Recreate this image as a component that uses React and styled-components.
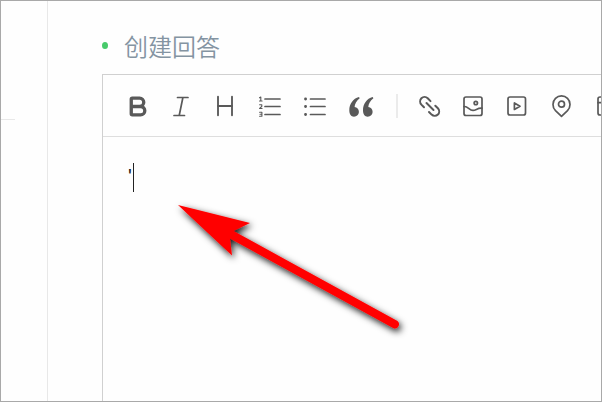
import React from "react";
import styled, { createGlobalStyle } from "styled-components";
import { Bold, Heading } from "lucide-react";

const GlobalStyle = createGlobalStyle`
  *, *::before, *::after { box-sizing: border-box; }
  body { margin: 0; background: #fefefe; font-family: "Noto Sans CJK SC", sans-serif; }
`;

const Page = styled.div`
  position: relative;
  display: flex;
  min-height: 100vh;
  overflow: hidden;
  border: 1px solid #a9a9a9;
`;

const Sidebar = styled.aside`
  flex: none;
  width: 47px;
  padding-top: 118px;
  border-right: 1px solid #e8e8e8;
`;

const SidebarRule = styled.hr`
  width: 14px;
  margin: 0;
  border: 0;
  border-top: 1px solid #e8e8e8;
`;

const Main = styled.main`
  flex: 1;
  min-width: 0;
  display: flex;
  flex-direction: column;
  padding-left: 54px;
`;

const Title = styled.h1`
  display: flex;
  align-items: center;
  gap: 16px;
  height: 73px;
  margin: 0;
  padding-top: 16px;
  color: #8494a2;
  font-size: 24px;
  font-weight: 350;
  line-height: 32px;
`;

const Dot = styled.span`
  width: 6px;
  height: 7px;
  border-radius: 50%;
  background: #47ca6b;
`;

const Editor = styled.section`
  flex: 1;
  display: flex;
  flex-direction: column;
  border: 1px solid #d0d0d0;
  border-width: 1px 0 0 1px;
`;

const Toolbar = styled.div`
  display: flex;
  overflow: hidden;
  padding: 19px 0 18px 12px;
  border-bottom: 1px solid #dedede;
`;

const ToolButton = styled.button`
  flex: none;
  display: flex;
  align-items: center;
  justify-content: center;
  width: ${(p) => (p.$wide ? 46 : 44)}px;
  height: 24px;
  padding: 0;
  border: 0;
  background: none;
  color: #595959;
  cursor: pointer;

  svg { flex: none; }
`;

const Divider = styled.span`
  flex: none;
  width: 2px;
  margin: 0 10px 0 11px;
  background: #ebebeb;
`;

const Writing = styled.div`
  position: relative;
  flex: 1;
  display: flex;
`;

const TextBox = styled.textarea`
  flex: 1;
  padding: 24px 25px;
  border: 0;
  outline: 0;
  resize: none;
  background: transparent;
  color: #1a1a1a;
  font: 20px/30px "Liberation Sans", sans-serif;
`;

const Caret = styled.span`
  position: absolute;
  left: 30px;
  top: 26px;
  width: 1px;
  height: 29px;
  background: #222;
`;

const Arrow = styled.svg`
  position: absolute;
  left: 163px;
  top: 191px;
  pointer-events: none;
`;

const Icon = ({ children }) => (
  <svg width="24" height="24" viewBox="0 0 24 24" fill="none" stroke="currentColor" strokeWidth="1.7" strokeLinecap="round" strokeLinejoin="round" aria-hidden="true">
    {children}
  </svg>
);

const ItalicIcon = () => (
  <Icon>
    <path d="M8.500 3.500h10.500M5 21.500h10.500M13.900 3.500 10.200 21.500" />
  </Icon>
);

const OrderedIcon = () => (
  <Icon>
    <path d="M7 5h15M7 12.5h15M7 20.5h15" />
    <g strokeWidth="1.1">
      <path d="M1.5 3.8 2.8 3v4M1.5 7h2.6" />
      <path d="M1.6 10.8h2.2v1.6L1.6 14.5h2.5" />
      <path d="M1.6 18.2h2.3v4H1.6M2 20.2h1.9" />
    </g>
  </Icon>
);

const BulletIcon = () => (
  <Icon>
    <path d="M6.5 5H21M6.5 12.5H21M6.5 20.5H21" />
    <path d="M1.500 5h.1M1.500 12.500h.1M1.500 20.500h.1" strokeWidth="2.8" />
  </Icon>
);

const QuoteIcon = () => (
  <svg width="26" height="24" viewBox="0 0 26 24" fill="currentColor" aria-hidden="true">
    <path d="M10 3C4 4.5.3 10 .3 16.5c0 3.7 1.8 6.2 4.7 6.2 2.8 0 4.9-2.1 4.9-4.9 0-2.7-1.8-4.8-4.3-4.9C5.8 9.8 7.4 6.8 10.7 4.2Z" />
    <path d="M23.7 3C17.7 4.5 14 10 14 16.5c0 3.7 1.8 6.2 4.7 6.2 2.8 0 4.9-2.1 4.9-4.9 0-2.7-1.8-4.8-4.3-4.9.2-3.1 1.8-6.1 5.1-8.7Z" />
  </svg>
);

const LinkIcon = () => (
  <Icon>
    <g strokeWidth="2">
      <path d="m8.500 9 7 7" />
      <path d="M6 13.200 3.400 10.600a4.600 4.600 0 0 1 0-6.300 4.600 4.600 0 0 1 6.300 0l2.800 2.800" />
      <path d="m11 18 2.600 2.600a4.600 4.600 0 0 0 6.300 0 4.600 4.600 0 0 0 0-6.300l-2.600-2.600" />
    </g>
  </Icon>
);

const ImageIcon = () => (
  <Icon>
    <rect x="2" y="3" width="18" height="18.5" rx="2" />
    <circle cx="13.8" cy="9" r="1.7" />
    <path d="M2 12.6c3.5-1 5.2 3.8 9 3.8 3.2 0 4.2-2.6 9-2.2" />
  </Icon>
);

const VideoIcon = () => (
  <Icon>
    <rect x="2" y="3" width="17.5" height="18" rx="2" />
    <path d="M8.4 9v6.5l5.6-3.2Z" />
  </Icon>
);

const PinIcon = () => (
  <Icon>
    <path d="M11.500 22.300 5.500 16.600A8.600 8.600 0 0 1 3 10.400a8.500 8.500 0 0 1 17 0c0 2.500-1 4.600-2.500 6.200Z" />
    <circle cx="11.5" cy="10.2" r="3" />
  </Icon>
);

const CardIcon = () => (
  <Icon>
    <rect x="4" y="3" width="18" height="18" rx="2" />
    <path d="M4 8.7h18M8.5 3v5" />
  </Icon>
);

const textTools = [
  ["粗体", <Bold size={25} strokeWidth={3.2} />],
  ["斜体", <ItalicIcon />],
  ["标题", <Heading size={28} strokeWidth={1.6} />],
];

const blockTools = [
  ["有序列表", <OrderedIcon />],
  ["无序列表", <BulletIcon />],
  ["引用", <QuoteIcon />],
];

const insertTools = [
  ["链接", <LinkIcon />],
  ["图片", <ImageIcon />],
  ["视频", <VideoIcon />],
  ["位置", <PinIcon />],
  ["卡片", <CardIcon />],
];

const Tools = ({ items, wide }) =>
  items.map(([label, icon]) => (
    <ToolButton key={label} type="button" aria-label={label} $wide={wide}>
      {icon}
    </ToolButton>
  ));

export default function App() {
  return (
    <>
      <GlobalStyle />
      <Page>
        <Sidebar>
          <SidebarRule />
        </Sidebar>
        <Main>
          <Title id="answer-title">
            <Dot />
            创建回答
          </Title>
          <Editor>
            <Toolbar role="toolbar">
              <Tools items={textTools} />
              <Tools items={blockTools} wide />
              <Divider />
              <Tools items={insertTools} />
            </Toolbar>
            <Writing>
              <TextBox aria-labelledby="answer-title" defaultValue="'" spellCheck={false} />
              <Caret />
            </Writing>
          </Editor>
        </Main>
        <Arrow width="256" height="156" viewBox="164 192 256 156" aria-hidden="true">
          <defs>
            <filter id="shadow" x="-20%" y="-20%" width="140%" height="140%">
              <feDropShadow dx="2" dy="3" stdDeviation="3.5" floodColor="#000" floodOpacity="0.9" />
            </filter>
          </defs>
          <path
            d="M178 205 250 223 233.500 231 397.500 321A4.300 4.300 0 0 1 394 328.500L230 238.500 232 255.500Z"
            fill="#f00"
            filter="url(#shadow)"
          />
        </Arrow>
      </Page>
    </>
  );
}
